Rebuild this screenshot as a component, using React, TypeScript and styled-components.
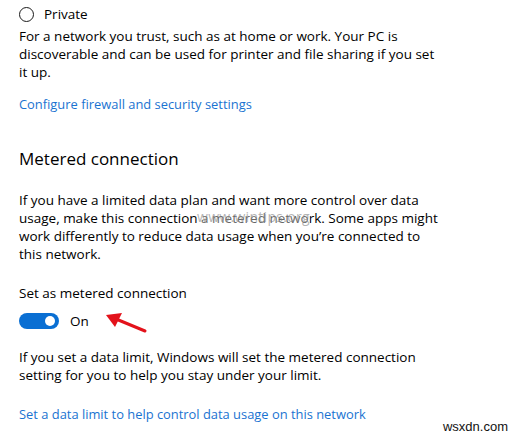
import styled, { createGlobalStyle } from "styled-components";

const GlobalStyle = createGlobalStyle`
  html, body {
    margin: 0;
    padding: 0;
    background: #ffffff;
  }
  body {
    font-family: "Open Sans", "Noto Sans", sans-serif;
    color: #000000;
  }
`;

const Page = styled.div`
  position: relative;
  width: 520px;
  height: 438px;
  padding: 0 19px;
  box-sizing: border-box;
  overflow: hidden;
  font-size: 13.5px;
  line-height: 18px;
`;

const RadioRow = styled.label`
  margin-top: 5px;
  height: 18px;
  display: flex;
  align-items: center;
  gap: 10px;
`;

const RadioCircle = styled.span`
  flex-shrink: 0;
  width: 15px;
  height: 15px;
  box-sizing: border-box;
  border: 1.7px solid #1a1a1a;
  border-radius: 50%;
`;

const Text = styled.p<{ $gap: number }>`
  position: relative;
  margin: ${(p) => p.$gap}px 0 0;
  font-size: 13.5px;
  line-height: 18px;
`;

const SettingLink = styled.a<{ $gap: number }>`
  display: block;
  margin-top: ${(p) => p.$gap}px;
  font-size: 12.9px;
  color: #1a73d1;
  text-decoration: none;
`;

const Heading = styled.h2`
  margin: 34px 0 0;
  font-size: 17px;
  line-height: 24px;
  font-weight: 400;
`;

const ToggleRow = styled.div`
  position: relative;
  margin-top: 10px;
  height: 18px;
  display: flex;
  align-items: center;
  gap: 11px;
`;

const Switch = styled.span`
  position: relative;
  flex-shrink: 0;
  width: 40px;
  height: 16px;
  border-radius: 8px;
  background: #0a6fd3;

  &::after {
    content: "";
    position: absolute;
    right: 4px;
    top: 3px;
    width: 10px;
    height: 10px;
    border-radius: 50%;
    background: #ffffff;
  }
`;

const Arrow = styled.svg`
  position: absolute;
  left: 84px;
  top: -2px;
`;

const Watermark = styled.span`
  position: absolute;
  left: 178px;
  top: 17px;
  font-size: 14px;
  color: rgba(130, 130, 130, 0.6);
  letter-spacing: 0.3px;
  background: rgba(255, 255, 255, 0.4);
`;

const SiteMark = styled.span`
  position: absolute;
  right: 12px;
  bottom: 2px;
  font-family: "Liberation Sans", Arial, sans-serif;
  font-size: 13px;
  color: #111111;
`;

export default function App() {
  return (
    <>
      <GlobalStyle />
      <Page>
        <RadioRow>
          <RadioCircle />
          Private
        </RadioRow>
        <Text $gap={4}>
          For a network you trust, such as at home or work. Your PC is
          <br />
          discoverable and can be used for printer and file sharing if you set
          <br />
          it up.
        </Text>
        <SettingLink $gap={14}>Configure firewall and security settings</SettingLink>

        <Heading>Metered connection</Heading>
        <Text $gap={20}>
          If you have a limited data plan and want more control over data
          <br />
          usage, make this connection a metered network. Some apps might
          <br />
          work differently to reduce data usage when you’re connected to
          <br />
          this network.
          <Watermark>www.wintips.org</Watermark>
        </Text>

        <Text $gap={21}>Set as metered connection</Text>
        <ToggleRow>
          <Switch />
          On
          <Arrow width="44" height="24" viewBox="0 0 44 24">
            <path d="M42 21 L13 9" stroke="#e3121b" strokeWidth="3" strokeLinecap="round" />
            <path d="M3 5 L19 3 L12 17 Z" fill="#e3121b" />
          </Arrow>
        </ToggleRow>

        <Text $gap={18}>
          If you set a data limit, Windows will set the metered connection
          <br />
          setting for you to help you stay under your limit.
        </Text>
        <SettingLink $gap={21}>
          Set a data limit to help control data usage on this network
        </SettingLink>
        <SiteMark>wsxdn.com</SiteMark>
      </Page>
    </>
  );
}
